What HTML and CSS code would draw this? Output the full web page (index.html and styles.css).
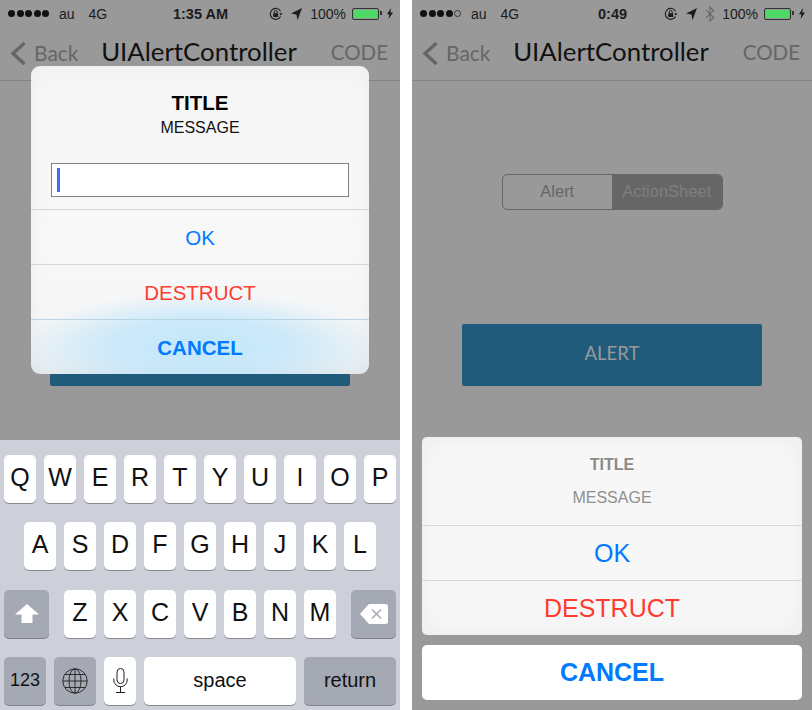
FILE: index.html
```html
<!DOCTYPE html>
<html lang="en">
<head>
	<meta charset="UTF-8">
	<title>UIAlertController</title>
	<link rel="stylesheet" href="styles.css">
</head>
<body>
	<div class="phones">
		<!-- alert with text field -->
		<div class="phone">
			<div class="status">
				<div class="status-left">
					<span class="dots"><i></i><i></i><i></i><i></i><i></i></span>
					<span class="carrier">au</span>
					<span class="net">4G</span>
				</div>
				<div class="time">1:35 AM</div>
				<div class="status-right">
					<svg class="ic-lock" width="14" height="14" viewBox="0 0 14 14"><path d="M11.6 9.6A5.5 5.5 0 1 1 11.6 4.2" fill="none" stroke="#1c1c1c" stroke-width="1.1"/><path d="M10.2 6.2h3.4L11.9 8.4z" fill="#1c1c1c"/><rect x="4.2" y="6.2" width="5" height="3.8" rx=".5" fill="#1c1c1c"/><path d="M5.2 6.4V5a1.5 1.5 0 0 1 3 0v1.4" fill="none" stroke="#1c1c1c" stroke-width="1"/></svg>
					<svg class="ic-loc" width="11" height="12" viewBox="0 0 11 12"><path d="M11 0L6.6 12 5.4 6.6 0 5.6z" fill="#1c1c1c"/></svg>
					<span class="pct">100%</span>
					<span class="battery"><span class="battery-fill"></span></span>
					<svg class="ic-bolt" width="6" height="11" viewBox="0 0 6 11"><path d="M4 0L0 6.2h2.4L1.6 11 6 4.4H3.4z" fill="#1c1c1c"/></svg>
				</div>
			</div>
			<div class="nav">
				<div class="back">
					<svg width="17" height="25" viewBox="0 0 17 25"><path d="M14.5 2L3 12.5 14.5 23" fill="none" stroke="#666" stroke-width="3.4"/></svg>
					<span>Back</span>
				</div>
				<div class="nav-title">UIAlertController</div>
				<div class="nav-code">CODE</div>
			</div>
			<div class="content">
				<div class="segment">
					<div class="seg-item">Alert</div>
					<div class="seg-item seg-on">ActionSheet</div>
				</div>
				<div class="alert-btn"></div>
			</div>

			<div class="alert">
				<div class="alert-head">
					<div class="alert-title">TITLE</div>
					<div class="alert-msg">MESSAGE</div>
					<div class="field"><div class="caret"></div></div>
				</div>
				<div class="alert-row blue">OK</div>
				<div class="alert-row red">DESTRUCT</div>
				<div class="alert-row blue bold tinted">CANCEL</div>
			</div>

			<div class="keyboard">
				<div class="kb-row">
					<div class="key">Q</div><div class="key">W</div><div class="key">E</div><div class="key">R</div><div class="key">T</div><div class="key">Y</div><div class="key">U</div><div class="key">I</div><div class="key">O</div><div class="key">P</div>
				</div>
				<div class="kb-row">
					<div class="key">A</div><div class="key">S</div><div class="key">D</div><div class="key">F</div><div class="key">G</div><div class="key">H</div><div class="key">J</div><div class="key">K</div><div class="key">L</div>
				</div>
				<div class="kb-row kb-row3">
					<div class="key key-dark key-side">
						<svg width="24" height="19" viewBox="0 0 24 19"><path d="M12 0L24 10.5H17.5V19H6.5V10.5H0z" fill="#fff"/></svg>
					</div>
					<div class="key">Z</div><div class="key">X</div><div class="key">C</div><div class="key">V</div><div class="key">B</div><div class="key">N</div><div class="key">M</div>
					<div class="key key-dark key-side">
						<svg width="28" height="20" viewBox="0 0 28 20"><path d="M9 0H25.5A2.5 2.5 0 0 1 28 2.5V17.5A2.5 2.5 0 0 1 25.5 20H9L0 10z" fill="#fff"/><path d="M12 5.5l9 9M21 5.5l-9 9" stroke="#a4a9b3" stroke-width="1.6"/></svg>
					</div>
				</div>
				<div class="kb-row">
					<div class="key key-dark key-num">123</div>
					<div class="key key-dark key-num">
						<svg width="26" height="26" viewBox="0 0 26 26" fill="none" stroke="#222" stroke-width=".9"><circle cx="13" cy="13" r="12.2"/><ellipse cx="13" cy="13" rx="6" ry="12.2"/><path d="M13 .8V25.2M.8 13H25.2M2.8 6.5H23.2M2.8 19.5H23.2"/></svg>
					</div>
					<div class="key key-mic">
						<svg width="15" height="25" viewBox="0 0 15 25" fill="none" stroke="#222" stroke-width="1"><rect x="4" y=".5" width="7" height="15" rx="3.5"/><path d="M.8 10.5V12a6.7 6.7 0 0 0 13.4 0V10.5M7.5 18.7V24.5M3 24.5H12"/></svg>
					</div>
					<div class="key key-wide key-space">space</div>
					<div class="key key-dark key-wide key-return">return</div>
				</div>
			</div>
		</div>

		<!-- action sheet -->
		<div class="phone">
			<div class="status">
				<div class="status-left">
					<span class="dots"><i></i><i></i><i></i><i></i><i class="off"></i></span>
					<span class="carrier">au</span>
					<span class="net">4G</span>
				</div>
				<div class="time">0:49</div>
				<div class="status-right">
					<svg class="ic-lock" width="14" height="14" viewBox="0 0 14 14"><path d="M11.6 9.6A5.5 5.5 0 1 1 11.6 4.2" fill="none" stroke="#1c1c1c" stroke-width="1.1"/><path d="M10.2 6.2h3.4L11.9 8.4z" fill="#1c1c1c"/><rect x="4.2" y="6.2" width="5" height="3.8" rx=".5" fill="#1c1c1c"/><path d="M5.2 6.4V5a1.5 1.5 0 0 1 3 0v1.4" fill="none" stroke="#1c1c1c" stroke-width="1"/></svg>
					<svg class="ic-loc" width="11" height="12" viewBox="0 0 11 12"><path d="M11 0L6.6 12 5.4 6.6 0 5.6z" fill="#1c1c1c"/></svg>
					<svg class="ic-bt" width="10" height="16" viewBox="0 0 10 16"><path d="M1 4.2L8.6 11.4 5 15V1L8.6 4.6 1 11.8" fill="none" stroke="#666" stroke-width="1.1"/></svg>
					<span class="pct pct-bt">100%</span>
					<span class="battery"><span class="battery-fill"></span></span>
					<svg class="ic-bolt" width="6" height="11" viewBox="0 0 6 11"><path d="M4 0L0 6.2h2.4L1.6 11 6 4.4H3.4z" fill="#1c1c1c"/></svg>
				</div>
			</div>
			<div class="nav">
				<div class="back">
					<svg width="17" height="25" viewBox="0 0 17 25"><path d="M14.5 2L3 12.5 14.5 23" fill="none" stroke="#666" stroke-width="3.4"/></svg>
					<span>Back</span>
				</div>
				<div class="nav-title">UIAlertController</div>
				<div class="nav-code">CODE</div>
			</div>
			<div class="content">
				<div class="segment">
					<div class="seg-item">Alert</div>
					<div class="seg-item seg-on">ActionSheet</div>
				</div>
				<div class="alert-btn">ALERT</div>
			</div>

			<div class="sheet">
				<div class="sheet-group">
					<div class="sheet-head">
						<div class="sheet-title">TITLE</div>
						<div class="sheet-msg">MESSAGE</div>
					</div>
					<div class="sheet-row blue">OK</div>
					<div class="sheet-row red">DESTRUCT</div>
				</div>
				<div class="sheet-cancel blue bold">CANCEL</div>
			</div>
		</div>
	</div>
</body>
</html>
```

FILE: styles.css
```css
* {
	box-sizing: border-box;
}
html,
body {
	margin: 0;
	padding: 0;
	background: #fff;
}
body {
	font-family: "Liberation Sans", Arial, sans-serif;
	overflow: hidden;
}
.phones {
	display: flex;
	gap: 12px;
	width: 812px;
	height: 710px;
}
.phone {
	position: relative;
	flex: none;
	width: 400px;
	height: 710px;
	overflow: hidden;
	background: #999;
}

/* status bar */
.status {
	display: grid;
	grid-template-columns: 1fr auto 1fr;
	align-items: center;
	height: 27px;
	padding: 0 7px 0 8px;
	font-size: 14px;
	color: #1c1c1c;
}
.status-left,
.status-right {
	display: flex;
	align-items: center;
}
.status-right {
	justify-content: flex-end;
}
.dots {
	display: flex;
	gap: 1.5px;
}
.dots i {
	display: block;
	width: 7px;
	height: 7px;
	border-radius: 50%;
	background: #111;
}
.dots i.off {
	background: none;
	border: 1px solid #333;
}
.carrier {
	margin-left: 10px;
}
.net {
	margin-left: 14px;
}
.time {
	font-weight: bold;
	font-size: 14.5px;
}
.ic-loc {
	margin-left: 8px;
}
.ic-bt {
	margin-left: 8px;
}
.pct {
	margin-left: 8px;
}
.pct-bt {
	margin-left: 7px;
}
.battery {
	position: relative;
	width: 27px;
	height: 12px;
	margin: 0 8px 0 6px;
	padding: 1px;
	border: 1px solid #333;
	border-radius: 2px;
}
.battery::after {
	content: "";
	position: absolute;
	top: 2px;
	right: -4px;
	width: 2px;
	height: 4px;
	background: #333;
}
.battery-fill {
	display: block;
	height: 100%;
	background: #4cd964;
}

/* nav bar */
.nav {
	display: grid;
	grid-template-columns: 1fr auto 1fr;
	align-items: center;
	height: 54px;
	padding: 0 12px 0 10px;
	border-bottom: 1px solid #828282;
	font-family: Lato, "Liberation Sans", sans-serif;
}
.back {
	display: flex;
	align-items: center;
	gap: 7px;
	font-size: 21px;
	color: #666;
}
.back span {
	margin-bottom: 2px;
}
.nav-title {
	margin-bottom: 5px;
	font-size: 25.8px;
	color: #111;
}
.nav-code {
	margin-bottom: 3px;
	text-align: right;
	font-size: 20.5px;
	color: #666;
}

.content {
	display: flex;
	flex-direction: column;
	align-items: center;
	padding-top: 93px;
}
.segment {
	display: flex;
	width: 221px;
	height: 36px;
	border: 1px solid #666;
	border-radius: 5px;
	overflow: hidden;
	font-size: 16.5px;
	color: #666;
}
.seg-item {
	display: flex;
	align-items: center;
	justify-content: center;
	flex: 1;
	padding-bottom: 1px;
}
.seg-on {
	background: #666;
	color: #7f7f7f;
}
.alert-btn {
	display: flex;
	align-items: center;
	justify-content: center;
	width: 300px;
	height: 62px;
	margin-top: 114px;
	padding-bottom: 4px;
	border-radius: 2px;
	background: #215b7b;
	font-family: Lato, "Liberation Sans", sans-serif;
	font-size: 18.5px;
	color: #999;
}

/* alert */
.alert {
	position: absolute;
	top: 66px;
	left: 31px;
	display: flex;
	flex-direction: column;
	width: 338px;
	height: 308px;
	border-radius: 9px;
	overflow: hidden;
	background:
		radial-gradient(ellipse 172px 54px at 50% 91%, #c4e7fb 0, #cbe9fa 50%, rgba(205, 232, 248, 0) 100%),
		linear-gradient(#f6f6f6 0, #f8f8f8 60%, #f5f6f7 80%, #e6eef2 100%);
	box-shadow: inset 0 0 22px rgba(0, 0, 0, .04);
}
.alert-head {
	height: 143px;
	padding-top: 25px;
	text-align: center;
}
.alert-title {
	font-size: 20.5px;
	font-weight: bold;
	line-height: 24px;
	color: #000;
}
.alert-msg {
	padding-top: 1px;
	font-size: 16px;
	line-height: 24px;
	color: #111;
}
.field {
	height: 34px;
	margin: 23px 20px 0;
	border: 1px solid #808080;
	background: #fff;
}
.caret {
	width: 3px;
	height: 24px;
	margin: 4px 0 0 5px;
	background: #3f6cf5;
}
.alert-row {
	display: flex;
	align-items: center;
	justify-content: center;
	height: 55px;
	padding-top: 1px;
	border-top: 1px solid #d6d6d6;
	font-size: 20.5px;
}
.tinted {
	border-top-color: #b9d5e2;
}
.blue {
	color: #007aff;
}
.red {
	color: #ff3b30;
}
.bold {
	font-weight: bold;
}

/* keyboard */
.keyboard {
	position: absolute;
	left: 0;
	bottom: 0;
	display: flex;
	flex-direction: column;
	gap: 19.33px;
	width: 400px;
	height: 270px;
	padding: 15px 4px 0;
	background: #cdd0d8;
}
.kb-row {
	display: flex;
	justify-content: center;
	gap: 8px;
}
.kb-row3 {
	justify-content: flex-start;
}
.kb-row3 .key-side:first-child {
	margin-right: 7px;
}
.kb-row3 .key-side:last-child {
	margin-left: 7px;
}
.key {
	display: flex;
	align-items: center;
	justify-content: center;
	flex: none;
	width: 32px;
	height: 48px;
	padding-bottom: 3px;
	border-radius: 5px;
	background: #fff;
	box-shadow: 0 1px 0 #8a8b8f;
	font-size: 25px;
	color: #111;
}
.key-dark {
	background: #a4a9b3;
	box-shadow: 0 1px 0 #7f828a;
}
.key-side {
	width: 45px;
	padding-bottom: 0;
}
.key-num {
	width: 42px;
	padding-bottom: 0;
	font-size: 18px;
}
.key-mic {
	padding-bottom: 0;
}
.key-wide {
	padding-bottom: 0;
	font-size: 20px;
}
.key-space {
	width: 152px;
}
.key-return {
	width: 92px;
}

/* action sheet */
.sheet {
	position: absolute;
	left: 10px;
	right: 10px;
	bottom: 10px;
	display: flex;
	flex-direction: column;
	gap: 10px;
}
.sheet-group {
	border-radius: 5px;
	overflow: hidden;
	background: #f7f7f7;
	box-shadow: inset 0 0 24px rgba(0, 0, 0, .05);
}
.sheet-head {
	height: 88px;
	padding-top: 16px;
	text-align: center;
}
.sheet-title {
	font-size: 16px;
	font-weight: bold;
	line-height: 24px;
	color: #8a8a8a;
}
.sheet-msg {
	margin-top: 9px;
	font-size: 16px;
	line-height: 24px;
	color: #8f8f8f;
}
.sheet-row {
	display: flex;
	align-items: center;
	justify-content: center;
	height: 55px;
	border-top: 1px solid #d8d8d8;
	font-size: 25px;
}
.sheet-cancel {
	display: flex;
	align-items: center;
	justify-content: center;
	height: 55px;
	border-radius: 5px;
	background: #fff;
	font-size: 25px;
}
```
